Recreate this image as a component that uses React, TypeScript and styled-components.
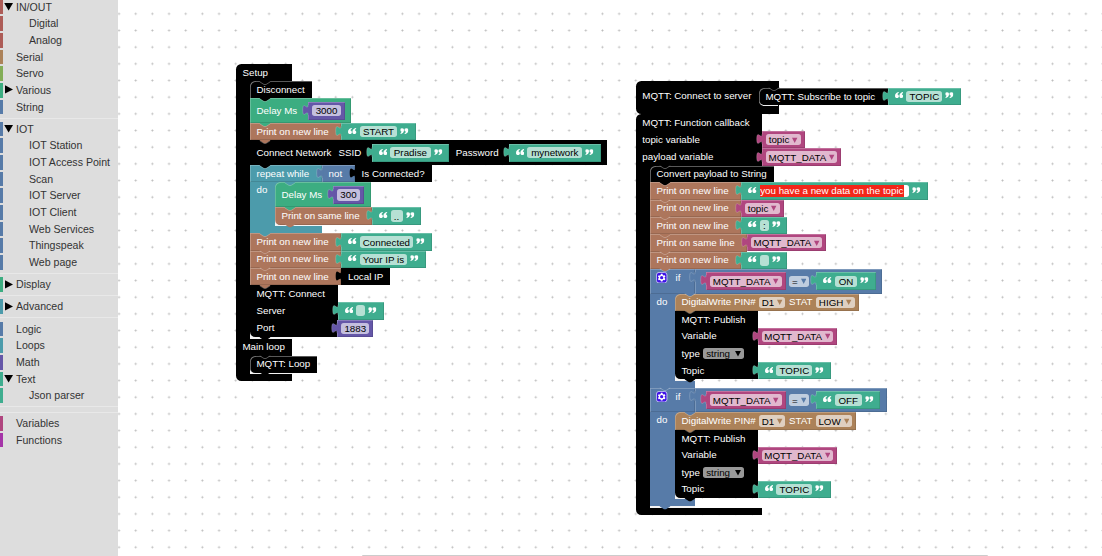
import React from "react";
import styled, { createGlobalStyle, css } from "styled-components";

const C = {
  black: "#000000",
  delay: "#3cad81",
  text: "#3fad8f",
  print: "#ad765c",
  loop: "#4c9bab",
  logic: "#577ba8",
  math: "#6557a8",
  variable: "#b0467f",
  pin: "#ac8259",
};

const Global = createGlobalStyle`
  html, body { margin: 0; padding: 0; }
  body { font-family: "Liberation Sans", Arial, sans-serif; background: #fff; overflow: hidden; }
`;

const Page = styled.div`
  display: flex;
  width: 1102px;
  height: 556px;
  overflow: hidden;
  background: #fff;
`;

/* ---------- toolbox ---------- */

const Toolbox = styled.nav`
  flex: 0 0 118px;
  box-sizing: border-box;
  height: 556px;
  background: #dddddd;
  overflow: hidden;
`;

const ToolboxList = styled.div`
  display: flex;
  flex-direction: column;
  margin-top: -0.4px;
`;

const Category = styled.div<{ $color: string }>`
  display: flex;
  flex: none;
  align-items: center;
  box-sizing: border-box;
  height: 14.67px;
  margin-bottom: 2px;
  border-left: 3px solid ${(p) => p.$color};
  font-size: 10.6px;
  line-height: 14.67px;
  color: #333;
  white-space: nowrap;
`;

const Expander = styled.span<{ $indent?: boolean }>`
  display: flex;
  flex: 0 0 ${(p) => (p.$indent ? 26 : 13)}px;
  padding-left: 1px;
  box-sizing: border-box;
  svg { display: block; }
`;

const Separator = styled.div`
  flex: none;
  height: 1px;
  margin: 1.4px 0 3.15px;
  background: #e8e8e8;
`;

type Cat = { name: string; color: string; sub?: boolean; state?: "open" | "closed" } | null;

const categories: Cat[] = [
  { name: "IN/OUT", color: "#ad5c57", state: "open" },
  { name: "Digital", color: "#ad5c57", sub: true },
  { name: "Analog", color: "#ad5c57", sub: true },
  { name: "Serial", color: "#ac8259" },
  { name: "Servo", color: "#83ad57" },
  { name: "Various", color: C.delay, state: "closed" },
  { name: "String", color: C.logic },
  null,
  { name: "IOT", color: C.logic, state: "open" },
  { name: "IOT Station", color: C.logic, sub: true },
  { name: "IOT Access Point", color: C.logic, sub: true },
  { name: "Scan", color: C.logic, sub: true },
  { name: "IOT Server", color: C.logic, sub: true },
  { name: "IOT Client", color: C.logic, sub: true },
  { name: "Web Services", color: C.logic, sub: true },
  { name: "Thingspeak", color: C.logic, sub: true },
  { name: "Web page", color: C.logic, sub: true },
  null,
  { name: "Display", color: C.delay, state: "closed" },
  null,
  { name: "Advanced", color: C.loop, state: "closed" },
  null,
  { name: "Logic", color: C.logic },
  { name: "Loops", color: C.loop },
  { name: "Math", color: C.math },
  { name: "Text", color: C.text, state: "open" },
  { name: "Json parser", color: C.text, sub: true },
  null,
  null,
  { name: "Variables", color: C.variable },
  { name: "Functions", color: "#a535a8" },
];

const ExpandIcon = ({ open }: { open: boolean }) => (
  <svg width="10" height="10" viewBox="0 0 10 10">
    <path d={open ? "M0.2 1H9L4.6 8.4Z" : "M1 0.2V8.6L9 4.4Z"} fill="#000" />
  </svg>
);

/* ---------- workspace ---------- */

const Workspace = styled.main`
  position: relative;
  flex: 1;
  height: 556px;
  overflow: hidden;
`;

const GridLayer = styled.svg`
  position: absolute;
  inset: 0;
`;

const ScrollBar = styled.div`
  position: absolute;
  left: 244px;
  top: 555px;
  width: 626px;
  height: 4px;
  border-radius: 1px;
  background: #ccc;
`;

const Program = styled.section<{ $x: number; $y: number }>`
  position: absolute;
  left: ${(p) => p.$x}px;
  top: ${(p) => p.$y}px;
  display: flex;
  flex-direction: column;
  align-items: flex-start;
  font-size: 9.77px;
  line-height: 12px;
  color: #fff;
  white-space: nowrap;
`;

const bevel = css<{ $color: string }>`
  box-shadow: ${(p) =>
    p.$color === C.black
      ? "none"
      : "inset 0.7px 0.7px 0 rgba(255,255,255,0.3), inset -0.7px -0.7px 0 rgba(0,0,0,0.16)"};
`;

const BlockShape = styled.div<{
  $w: number;
  $h: number;
  $color: string;
  $tl?: boolean;
  $bl?: boolean;
  $outlined?: boolean;
}>`
  position: relative;
  flex: none;
  box-sizing: border-box;
  width: ${(p) => p.$w}px;
  height: ${(p) => p.$h}px;
  background: ${(p) => p.$color};
  border-top-left-radius: ${(p) => (p.$tl ? 5.3 : 0)}px;
  border-bottom-left-radius: ${(p) => (p.$bl ? 5.3 : 0)}px;
  ${bevel}
  ${(p) => p.$outlined && "box-shadow: inset 0.8px 0.8px 0 #777;"}
`;

const Line = styled.div<{ $h: number; $pad?: number; $top?: boolean }>`
  display: flex;
  align-items: ${(p) => (p.$top ? "flex-start" : "center")};
  width: max-content;
  height: ${(p) => p.$h}px;
  box-sizing: border-box;
  padding-left: ${(p) => p.$pad ?? 6.7}px;
`;

const Label = styled.span<{ $w?: number; $dy?: number; $indent?: number }>`
  flex: none;
  box-sizing: border-box;
  ${(p) => p.$w !== undefined && `width: ${p.$w}px;`}
  padding-top: ${(p) => p.$dy ?? 0}px;
  padding-left: ${(p) => p.$indent ?? 0}px;
`;

const Gap = styled.span<{ $w: number }>`
  flex: 0 0 ${(p) => p.$w}px;
`;

const Row = styled.div`
  display: flex;
  align-items: flex-start;
`;

const Column = styled.div`
  display: flex;
  flex-direction: column;
  align-items: flex-start;
`;

const Arm = styled.div<{ $w: number; $color: string }>`
  flex: none;
  box-sizing: border-box;
  width: ${(p) => p.$w}px;
  padding: 2px 0 0 6.8px;
  background: ${(p) => p.$color};
`;

/* Inner statement stack; the pale lip shows under its last block */
const Inner = styled(Column)<{ $lip: number; $lipWidth: number; $back: string }>`
  padding-bottom: ${(p) => p.$lip}px;
  background:
    linear-gradient(#f4f4f4, #f4f4f4) left bottom / ${(p) => p.$lipWidth}px 7px no-repeat,
    linear-gradient(${(p) => p.$back}, ${(p) => p.$back}) left top / 8px 8px no-repeat;
`;

const NotchSvg = styled.svg`
  position: absolute;
  left: 9px;
  top: -0.6px;
  z-index: 1;
  pointer-events: none;
`;

const Notch = ({ color, line = "rgba(255,255,255,0.35)" }: { color: string; line?: string }) => (
  <NotchSvg width="13" height="5" viewBox="0 0 13 5">
    <path d="M0.8 0V0.6L5 3.3H7L11.2 0.6V0Z" fill={color} />
    <path d="M0.8 0.9L5 3.5H7L11.2 0.9" fill="none" stroke={line} strokeWidth="0.7" />
  </NotchSvg>
);

type BlockProps = {
  w: number;
  h: number;
  color: string;
  above?: string;
  tl?: boolean;
  bl?: boolean;
  outlined?: boolean;
  children?: React.ReactNode;
};

const Block = ({ w, h, color, above, tl, bl, outlined, children }: BlockProps) => (
  <BlockShape $w={w} $h={h} $color={color} $tl={tl} $bl={bl} $outlined={outlined}>
    {above && (
      <Notch
        color={above}
        line={above === C.black && color === C.black ? (outlined ? "#777" : "none") : undefined}
      />
    )}
    {children}
  </BlockShape>
);

/* ---------- value blocks ---------- */

const ValueShape = styled.div<{ $w: number; $h: number; $color: string }>`
  position: relative;
  flex: none;
  display: flex;
  align-items: center;
  box-sizing: border-box;
  width: ${(p) => p.$w}px;
  height: ${(p) => p.$h}px;
  background: ${(p) => p.$color};
  ${bevel}
`;

const TabSvg = styled.svg`
  position: absolute;
  left: -6px;
  top: 3.1px;
  z-index: 1;
`;

const Value = ({
  w,
  h = 17.2,
  color,
  children,
}: {
  w: number;
  h?: number;
  color: string;
  children?: React.ReactNode;
}) => (
  <ValueShape $w={w} $h={h} $color={color}>
    <TabSvg width="8" height="11" viewBox="0 0 8 11">
      <path d="M7.2 0H6C6 6.67 0.7 -5.33 0.7 5S6 3.33 6 10H7.2Z" fill={color} />
      <path
        d="M6 0C6 6.67 0.7 -5.33 0.7 5S6 3.33 6 10"
        fill="none"
        stroke={color === C.black ? "none" : "rgba(255,255,255,0.28)"}
        strokeWidth="0.7"
      />
    </TabSvg>
    {children}
  </ValueShape>
);

const Field = styled.span<{ $w?: number; $bg?: string }>`
  display: flex;
  align-items: center;
  justify-content: center;
  box-sizing: border-box;
  ${(p) => (p.$w ? `flex: none; width: ${p.$w}px;` : "flex: 1;")}
  height: 11.2px;
  border-radius: 2.7px;
  background: ${(p) => p.$bg ?? "rgba(255,255,255,0.62)"};
  color: #000;
  line-height: 11px;
`;

const TextBody = styled.div`
  display: flex;
  flex: 1;
  align-items: center;
  gap: 3px;
  padding: 0 7px 0 6.9px;
`;

const QuoteSvg = styled.svg<{ $close?: boolean }>`
  flex: none;
  display: block;
  margin-bottom: 2px;
  ${(p) => p.$close && "transform: rotate(180deg);"}
`;

const quotePath =
  "M3.6 0C1.2 .5 0 2 0 3.9C0 5.2 .8 6.1 2 6.1S3.9 5.3 3.9 4.3S3.1 2.6 2.4 2.6C2.5 1.9 3 1.2 3.9 .8Z";

const Quote = ({ close }: { close?: boolean }) => (
  <QuoteSvg $close={close} width="8.4" height="6.2" viewBox="0 0 8.4 6.2">
    <path d={quotePath} fill="#fff" />
    <path d={quotePath} transform="translate(4.4 0)" fill="#fff" />
  </QuoteSvg>
);

const TextValue = ({ w, h, children }: { w: number; h?: number; children?: React.ReactNode }) => (
  <Value w={w} h={h} color={C.text}>
    <TextBody>
      <Quote />
      <Field>{children}</Field>
      <Quote close />
    </TextBody>
  </Value>
);

const PaddedBody = styled.div<{ $l?: number; $r?: number }>`
  display: flex;
  flex: 1;
  align-items: center;
  padding: 0 ${(p) => p.$r ?? 4}px 0 ${(p) => p.$l ?? 4}px;
`;

const NumberValue = ({ w, h, children }: { w: number; h?: number; children: string }) => (
  <Value w={w} h={h} color={C.math}>
    <PaddedBody>
      <Field>{children}</Field>
    </PaddedBody>
  </Value>
);

const ArrowSvg = styled.svg<{ $gap: number }>`
  flex: none;
  margin-left: ${(p) => p.$gap}px;
`;

const Arrow = ({ color, large }: { color: string; large?: boolean }) => (
  <ArrowSvg $gap={large ? 5 : 3} width={large ? 6 : 5.4} height={large ? 6.6 : 6} viewBox="0 0 5.4 6">
    <path d="M0 .8H5.4L2.7 6Z" fill={color} />
  </ArrowSvg>
);

const Dropdown = ({ w, color, children }: { w?: number; color: string; children: string }) => (
  <Field $w={w}>
    {children}
    <Arrow color={color} />
  </Field>
);

const VariableValue = ({ w, h, children }: { w: number; h?: number; children: string }) => (
  <Value w={w} h={h} color={C.variable}>
    <PaddedBody $l={3.5}>
      <Dropdown color={C.variable}>{children}</Dropdown>
    </PaddedBody>
  </Value>
);

const EditBox = styled.span`
  display: flex;
  flex: 1;
  align-items: center;
  height: 12px;
  border-radius: 2.7px;
  background: #fff;
`;

const Selection = styled.span`
  padding: 0 0 0 0.6px;
  height: 12px;
  background: #f3261a;
  color: #fff;
  line-height: 12px;
`;

/* ---------- composite statements ---------- */

const Print = ({
  above,
  same,
  last,
  children,
}: {
  above: string;
  same?: boolean;
  last?: boolean;
  children?: React.ReactNode;
}) => (
  <Row>
    <Block w={same ? 97.5 : 91.5} h={last ? 17.6 : 17.3} color={C.print} above={above} bl={last}>
      <Line $h={17.3}>
        <Label>{same ? "Print on same line" : "Print on new line"}</Label>
      </Line>
    </Block>
    {children}
  </Row>
);

const Delay = ({
  w,
  vw,
  above,
  tl,
  children,
}: {
  w: number;
  vw: number;
  above: string;
  tl?: boolean;
  children: string;
}) => (
  <Block w={w} h={24.9} color={C.delay} above={above} tl={tl}>
    <Line $h={24.9}>
      <Label $w={51.7}>Delay Ms</Label>
      <NumberValue w={vw} h={17.6}>
        {children}
      </NumberValue>
    </Line>
  </Block>
);

const Publish = () => (
  <Block w={83.2} h={68.5} color={C.black} above={C.pin} bl>
    <Line $h={16.9}>
      <Label $dy={1}>MQTT: Publish</Label>
    </Line>
    <Line $h={17.3}>
      <Label $w={76.6}>Variable</Label>
      <VariableValue w={79}>MQTT_DATA</VariableValue>
    </Line>
    <Line $h={17}>
      <Label $w={21.6} $dy={0.8}>
        type
      </Label>
      <Field $w={41} $bg="#999">
        string
        <Arrow color="#000" large />
      </Field>
    </Line>
    <Line $h={17.3}>
      <Label $w={76.6}>Topic</Label>
      <TextValue w={72.8}>TOPIC</TextValue>
    </Line>
  </Block>
);

const GearSvg = styled.svg`
  flex: none;
  display: block;
  margin: 3px 7.6px 0 0;
`;

const Gear = () => (
  <GearSvg width="11.4" height="11.4" viewBox="0 0 16 16">
    <rect x="0.6" y="0.6" width="14.8" height="14.8" rx="3.6" fill="#3d12e6" stroke="#cfcff5" strokeWidth="1.2" />
    <path
      fill="#fff"
      fillRule="evenodd"
      d="M6.9 2.6h2.2l.4 1.7 1 .6 1.7-.5 1.1 1.9-1.2 1.2v1.1l1.2 1.2-1.1 1.9-1.7-.5-1 .6-.4 1.7H6.9l-.4-1.7-1-.6-1.7.5-1.1-1.9 1.2-1.2V7.5l-1.2-1.2 1.1-1.9 1.7.5 1-.6ZM8 5.7A2.3 2.3 0 1 0 8 10.3A2.3 2.3 0 1 0 8 5.7Z"
    />
  </GearSvg>
);

const StretchRow = styled.div`
  display: flex;
  align-items: stretch;
`;

const StretchArm = ({
  color,
  w,
  label,
  children,
}: {
  color: string;
  w: number;
  label?: string;
  children: React.ReactNode;
}) => (
  <StretchRow>
    <Arm $w={w} $color={color}>
      {label}
    </Arm>
    {children}
  </StretchRow>
);

const FootShape = styled.div<{ $w: number; $h?: number; $color: string; $bl?: boolean }>`
  position: relative;
  width: ${(p) => p.$w}px;
  ${(p) => p.$h !== undefined && `height: ${p.$h}px;`}
  background: ${(p) => p.$color};
  border-bottom-left-radius: ${(p) => (p.$bl ? 5.3 : 0)}px;
`;

const FootNotch = styled.div<{ $x: number }>`
  position: relative;
  margin-left: ${(p) => p.$x}px;
  top: -1.2px;
`;

const Foot = ({
  w,
  h,
  color,
  x,
  above = C.black,
  bl,
  children,
}: {
  w: number;
  h?: number;
  color: string;
  x: number;
  above?: string;
  bl?: boolean;
  children?: React.ReactNode;
}) => (
  <FootShape $w={w} $h={h} $color={color} $bl={bl}>
    <FootNotch $x={x}>
      <Notch color={above} line="none" />
    </FootNotch>
    {children}
  </FootShape>
);

const IfBlock = ({
  above,
  compareWidth,
  textWidth,
  value,
  stat,
  statWidth,
  writeWidth,
}: {
  above: string;
  compareWidth: number;
  textWidth: number;
  value: string;
  stat: string;
  statWidth: number;
  writeWidth: number;
}) => (
  <Column>
    <Row>
      <Block w={45} h={24.8} color={C.logic} above={above}>
        <Line $h={24.8} $top>
          <Gear />
          <Label $dy={3}>if</Label>
        </Line>
      </Block>
      <Value w={compareWidth} h={24.8} color={C.logic}>
        <PaddedBody $l={11.3} $r={0}>
          <VariableValue w={80} h={17.8}>
            MQTT_DATA
          </VariableValue>
          <Gap $w={3} />
          <Dropdown w={20} color={C.logic}>
            =
          </Dropdown>
          <Gap $w={7.4} />
          <TextValue w={textWidth} h={17.8}>
            {value}
          </TextValue>
        </PaddedBody>
      </Value>
    </Row>
    <StretchArm color={C.logic} w={25} label="do">
      <Inner $lip={1.2} $lipWidth={20} $back={C.logic}>
        <Block w={writeWidth} h={17.2} color={C.pin} above={C.logic} tl>
          <Line $h={17.2}>
            <Label $w={77.4}>DigitalWrite PIN#</Label>
            <Dropdown w={26.6} color={C.pin}>
              D1
            </Dropdown>
            <Label $w={30.3} $indent={3.5}>
              STAT
            </Label>
            <Dropdown w={statWidth} color={C.pin}>
              {stat}
            </Dropdown>
          </Line>
        </Block>
        <Publish />
      </Inner>
    </StretchArm>
    <Foot w={45} h={7.1} color={C.logic} x={25} />
  </Column>
);

/* ---------- programs on the canvas ---------- */

const SetupProgram = () => (
  <Program $x={118.3} $y={64.3}>
    <Block w={56} h={17} color={C.black} tl>
      <Line $h={17} $pad={6.2}>
        <Label>Setup</Label>
      </Line>
    </Block>
    <StretchArm color={C.black} w={13.5}>
      <Inner $lip={1.5} $lipWidth={42.5} $back={C.black}>
        <Block w={62.5} h={17} color={C.black} above={C.black} tl outlined>
          <Line $h={17}>
            <Label>Disconnect</Label>
          </Line>
        </Block>
        <Delay w={101.6} vw={36.7} above={C.black}>
          3000
        </Delay>
        <Print above={C.delay}>
          <TextValue w={74.5}>START</TextValue>
        </Print>
        <Block w={357.6} h={24.7} color={C.black} above={C.print}>
          <Line $h={24.7}>
            <Label $w={82}>Connect Network</Label>
            <Label $w={33.5}>SSID</Label>
            <TextValue w={77} h={18.2}>
              Pradise
            </TextValue>
            <Label $w={60} $indent={6.8}>
              Password
            </Label>
            <TextValue w={91.8} h={18.2}>
              mynetwork
            </TextValue>
          </Line>
        </Block>
        <Row>
          <Block w={72} h={17.3} color={C.loop} above={C.black}>
            <Line $h={17.3}>
              <Label>repeat while</Label>
            </Line>
          </Block>
          <Value w={33.3} h={17.3} color={C.logic}>
            <PaddedBody $l={6.8}>not</PaddedBody>
          </Value>
          <Value w={76.6} h={17.3} color={C.black}>
            <PaddedBody $l={6.5}>Is Connected?</PaddedBody>
          </Value>
        </Row>
        <StretchArm color={C.loop} w={25} label="do">
          <Inner $lip={1.2} $lipWidth={47} $back={C.loop}>
            <Delay w={96} vw={30.7} above={C.loop} tl>
              300
            </Delay>
            <Print above={C.delay} same last>
              <TextValue w={48.7} h={17.4}>
                ..
              </TextValue>
            </Print>
          </Inner>
        </StretchArm>
        <Foot w={72} h={7.3} color={C.loop} x={25} above={C.print} />
        <Print above={C.loop}>
          <TextValue w={90.3}>Connected</TextValue>
        </Print>
        <Print above={C.print}>
          <TextValue w={84.4}>Your IP is</TextValue>
        </Print>
        <Print above={C.print}>
          <Value w={49} color={C.black} h={17.3}>
            <PaddedBody $l={6.7}>Local IP</PaddedBody>
          </Value>
        </Print>
        <Block w={88} h={51.7} color={C.black} above={C.print} bl>
          <Line $h={16.7}>
            <Label>MQTT: Connect</Label>
          </Line>
          <Line $h={17.6}>
            <Label $w={81.2}>Server</Label>
            <TextValue w={46} h={17.4} />
          </Line>
          <Line $h={17.4}>
            <Label $w={81}>Port</Label>
            <NumberValue w={35.6}>1883</NumberValue>
          </Line>
        </Block>
      </Inner>
    </StretchArm>
    <Foot w={56} color={C.black} x={13.5}>
      <Line $h={17.1} $pad={6.2}>
        <Label>Main loop</Label>
      </Line>
    </Foot>
    <StretchArm color={C.black} w={13.5}>
      <Inner $lip={1} $lipWidth={42.5} $back={C.black}>
        <Block w={67.6} h={17.2} color={C.black} above={C.black} tl bl outlined>
          <Line $h={17.2}>
            <Label>MQTT: Loop</Label>
          </Line>
        </Block>
      </Inner>
    </StretchArm>
    <Foot w={56} h={7.4} color={C.black} x={13.5} bl />
  </Program>
);

const SubscribeShape = styled.div`
  padding-bottom: 0.8px;
  border-bottom-left-radius: 5.3px;
  background: linear-gradient(#eee, #eee) left bottom / 19px 7px no-repeat;
`;

const ServerProgram = () => (
  <Program $x={518} $y={81.2}>
    <Block w={143} h={32.9} color={C.black} tl bl>
      <Line $h={31.6} $pad={6.3}>
        <Label $w={116.5}>
          <Raised>MQTT: Connect to server</Raised>
        </Label>
        <Row>
          <SubscribeShape>
            <Block w={129.3} h={17.3} color={C.black} above={C.black} tl bl outlined>
              <Line $h={17.3}>
                <Label>MQTT: Subscribe to topic</Label>
              </Line>
            </Block>
          </SubscribeShape>
          <TextValue w={72.7} h={17.3}>
            TOPIC
          </TextValue>
        </Row>
      </Line>
    </Block>
  </Program>
);

const Raised = styled.span`
  display: block;
  padding-bottom: 1.6px;
`;

const CallbackProgram = () => (
  <Program $x={518} $y={114.3}>
    <Block w={126.4} h={51.5} color={C.black} tl>
      <Line $h={16.7} $pad={6.3}>
        <Label>MQTT: Function callback</Label>
      </Line>
      <Line $h={17.4} $pad={6.3}>
        <Label $w={120}>topic variable</Label>
        <VariableValue w={42.4}>topic</VariableValue>
      </Line>
      <Line $h={17.4} $pad={6.3}>
        <Label $w={120}>payload variable</Label>
        <VariableValue w={79.2}>MQTT_DATA</VariableValue>
      </Line>
    </Block>
    <StretchArm color={C.black} w={13.8}>
      <Inner $lip={1.2} $lipWidth={45} $back={C.black}>
        <Block w={124.3} h={16.6} color={C.black} above={C.black} tl outlined>
          <Line $h={16.6}>
            <Label>Convert payload to String</Label>
          </Line>
        </Block>
        <Print above={C.black}>
          <Value w={186.4} color={C.text}>
            <TextBody>
              <Quote />
              <EditBox>
                <Selection>you have a new data on the topic</Selection>
              </EditBox>
              <Quote close />
            </TextBody>
          </Value>
        </Print>
        <Print above={C.print}>
          <VariableValue w={42.4}>topic</VariableValue>
        </Print>
        <Print above={C.print}>
          <TextValue w={46}>:</TextValue>
        </Print>
        <Print above={C.print} same>
          <VariableValue w={79.2}>MQTT_DATA</VariableValue>
        </Print>
        <Print above={C.print}>
          <TextValue w={46} />
        </Print>
        <IfBlock
          above={C.print}
          compareWidth={187}
          textWidth={59.2}
          value="ON"
          stat="HIGH"
          statWidth={39}
          writeWidth={184}
        />
        <IfBlock
          above={C.logic}
          compareWidth={192}
          textWidth={63.7}
          value="OFF"
          stat="LOW"
          statWidth={36}
          writeWidth={181}
        />
      </Inner>
    </StretchArm>
    <Foot w={126.4} h={7.2} color={C.black} x={13.8} above={C.logic} bl />
  </Program>
);

export default function App() {
  return (
    <>
      <Global />
      <Page>
        <Toolbox>
          <ToolboxList>
            {categories.map((c, i) =>
              c === null ? (
                <Separator key={i} />
              ) : (
                <Category key={i} $color={c.color}>
                  <Expander $indent={c.sub}>
                    {c.state && <ExpandIcon open={c.state === "open"} />}
                  </Expander>
                  {c.name}
                </Category>
              )
            )}
          </ToolboxList>
        </Toolbox>
        <Workspace>
          <GridLayer width="984" height="556">
            <defs>
              <pattern id="grid" width="16.67" height="16.67" patternUnits="userSpaceOnUse" x="-7.3" y="5.5">
                <path d="M7.2 8.33H9.5M8.33 7.2V9.5" stroke="#b2b2b2" strokeWidth="0.67" />
              </pattern>
            </defs>
            <rect width="984" height="556" fill="url(#grid)" />
          </GridLayer>
          <SetupProgram />
          <ServerProgram />
          <CallbackProgram />
          <ScrollBar />
        </Workspace>
      </Page>
    </>
  );
}
